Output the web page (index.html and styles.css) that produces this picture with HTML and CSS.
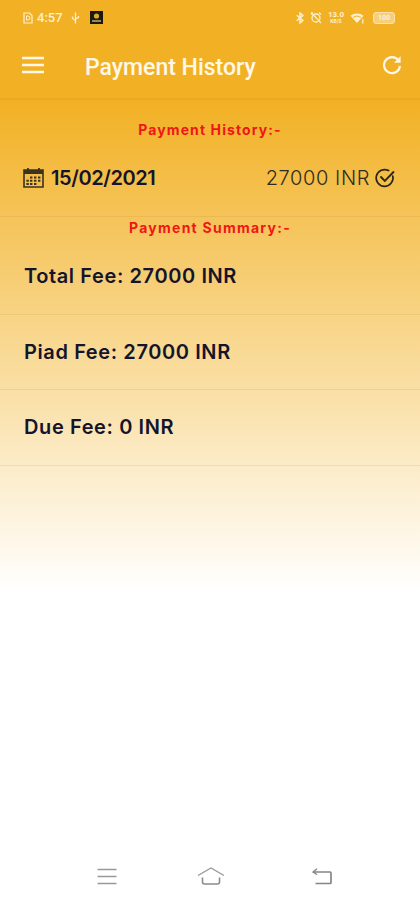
FILE: index.html
```html
<!DOCTYPE html>
<html lang="en">
<head>
    <meta charset="UTF-8">
    <meta name="viewport" content="width=device-width, initial-scale=1.0">
    <title>Payment History</title>
    <link rel="stylesheet" href="styles.css">
</head>
<body>
    <div class="screen">
        <div class="appbar">
            <div class="statusbar">
                <div class="status-left">
                    <svg class="ic-sim" width="10" height="12" viewBox="0 0 10 12"><path d="M1 1h5.500L9 3.500V11H1z" fill="none" stroke="#fdf0d0" stroke-width="1.2"/><path d="M3.500 4h1.500a2 2 0 0 1 0 4H3.500z" fill="none" stroke="#fdf0d0" stroke-width="1"/></svg>
                    <span class="clock">4:57</span>
                    <svg class="ic-usb" width="9" height="12" viewBox="0 0 9 12"><path d="M4.500 0.500v11" fill="none" stroke="#fdf0d0" stroke-width="1.300"/><path d="M4.500 8.500L1.500 6.500V4.500M4.500 7l3-1.500V4" fill="none" stroke="#fdf0d0" stroke-width="1.300"/></svg>
                    <svg class="ic-app" width="13" height="13" viewBox="0 0 13 13"><rect width="13" height="13" fill="#1c1a10"/><circle cx="6.500" cy="5" r="2.600" fill="#d9ad1f"/><rect x="2" y="9" width="9" height="2" fill="#8f8a60"/></svg>
                </div>
                <div class="status-right">
                    <svg width="8" height="12" viewBox="0 0 8 12"><path d="M0.800 3.200l6 5.400L4 11V1l2.800 2.400L0.800 8.800" fill="none" stroke="#fdf0d0" stroke-width="1.500"/></svg>
                    <svg width="12" height="13" viewBox="0 0 12 13"><circle cx="6" cy="7" r="4" fill="none" stroke="#fdf0d0" stroke-width="1.300"/><path d="M1 1.500l10 10.500M1 3.500l2-2M9 1.500l2 2" fill="none" stroke="#fdf0d0" stroke-width="1.100"/></svg>
                    <span class="speed"><b>13.0</b><i>KB/S</i></span>
                    <svg width="15" height="12" viewBox="0 0 15 12"><path d="M0.500 3.800a10 10 0 0 1 13 0L7 11z" fill="#fdf0d0"/><path d="M3 5.300a7 7 0 0 1 8 0" fill="none" stroke="#f2b124" stroke-width="1"/><path d="M12.800 7v4.500" stroke="#fdf0d0" stroke-width="1.300"/></svg>
                    <span class="battery">100</span>
                </div>
            </div>
            <div class="toolbar">
                <svg class="ic-menu" width="22" height="18" viewBox="0 0 22 18"><path d="M0 2h22M0 9h22M0 16h22" stroke="#fff8e8" stroke-width="2.400"/></svg>
                <span class="title">Payment History</span>
                <svg class="ic-refresh" width="20" height="20" viewBox="0 0 20 20"><path d="M16.400 5.200A8 8 0 1 0 18 11" fill="none" stroke="#fff8e8" stroke-width="2.200"/><path d="M18.600 1.200v6.600H12z" fill="#fff8e8"/></svg>
            </div>
        </div>

        <div class="content">
            <h2 class="heading">Payment History:-</h2>
            <div class="payment">
                <div class="payment-date">
                    <svg width="21" height="21" viewBox="0 0 21 21"><path d="M1 3h19v17H1z" fill="none" stroke="#3a3320" stroke-width="1.600"/><path d="M1 3h19v4H1z" fill="#3a3320"/><path d="M5 1v4M16 1v4" stroke="#3a3320" stroke-width="1.800"/><path d="M7 9.500h2.400v2H7zM11 9.500h2.400v2H11zM15 9.500h2.400v2H15zM3.400 12.700h2.400v2H3.400zM7 12.700h2.400v2H7zM11 12.700h2.400v2H11zM15 12.700h2.400v2H15zM3.400 16h2.400v2H3.400zM7 16h2.400v2H7zM11 16h2.400v2H11z" fill="#3a3320"/></svg>
                    <span>15/02/2021</span>
                </div>
                <div class="payment-amount">
                    <span>27000 INR</span>
                    <svg width="20" height="20" viewBox="0 0 20 20"><path d="M17.800 8.200A8.400 8.400 0 1 1 13.600 2.600" fill="none" stroke="#2a2618" stroke-width="1.700" stroke-linecap="round"/><path d="M6 9l3.800 3.800L18.500 4" fill="none" stroke="#2a2618" stroke-width="1.900" stroke-linecap="round"/></svg>
                </div>
            </div>
            <h2 class="heading heading-summary">Payment Summary:-</h2>
            <div class="fee-row">Total Fee: 27000 INR</div>
            <div class="fee-row">Piad Fee: 27000 INR</div>
            <div class="fee-row">Due Fee: 0 INR</div>
        </div>

        <div class="navbar">
            <svg width="20" height="17" viewBox="0 0 20 17"><path d="M0.500 1.500h19M0.500 8.500h19M0.500 15.500h19" stroke="#999" stroke-width="1.700"/></svg>
            <svg class="ic-home" width="28" height="18" viewBox="0 0 28 18"><path d="M1 8.500L14 1 27 8.500" fill="none" stroke="#999" stroke-width="1.400"/><path d="M5.500 10.500v4.500a2 2 0 0 0 2 2h13a2 2 0 0 0 2-2v-4.500" fill="none" stroke="#8c8c8c" stroke-width="1.600"/></svg>
            <svg width="20" height="17" viewBox="0 0 20 17"><path d="M1.500 4h16.500a1 1 0 0 1 1 1v9.500a1 1 0 0 1-1 1H3.500" fill="none" stroke="#858585" stroke-width="1.700"/><path d="M5 0.800L1 4l4 2.500" fill="none" stroke="#858585" stroke-width="1.400"/></svg>
        </div>
    </div>
</body>
</html>
```

FILE: styles.css
```css
* {
    box-sizing: border-box;
}
html, body {
    margin: 0;
    padding: 0;
    background: #fff;
}
.screen {
    width: 420px;
    height: 900px;
    display: flex;
    flex-direction: column;
    overflow: hidden;
}
.appbar {
    height: 100px;
    background: #f2b124;
    border-bottom: 2px solid #eaa922;
    padding: 0 24px 0 22px;
}
.statusbar {
    height: 35px;
    display: flex;
    align-items: center;
    justify-content: space-between;
    color: #fdf0d0;
    font-family: Roboto, sans-serif;
}
.status-left, .status-right {
    display: flex;
    align-items: center;
}
.status-left {
    gap: 3px;
    margin-left: 1px;
}
.status-right {
    gap: 6px;
    margin-right: 1px;
}
.clock {
    font-size: 13px;
    font-weight: 500;
    margin-left: 1px;
}
.ic-usb {
    margin-left: 5px;
}
.ic-app {
    margin-left: 7px;
}
.speed {
    display: flex;
    flex-direction: column;
    align-items: center;
    line-height: 7px;
}
.speed b {
    font-size: 8px;
    font-weight: 700;
}
.speed i {
    font-size: 5px;
    font-style: normal;
    font-weight: 700;
}
.battery {
    width: 22px;
    height: 12px;
    margin-left: 2px;
    border: 1px solid #fbe3ab;
    border-radius: 3px;
    background: #f7cf7c;
    font-size: 7px;
    line-height: 10px;
    text-align: center;
    font-weight: 700;
}
.toolbar {
    height: 63px;
    display: flex;
    align-items: center;
}
.ic-menu {
    margin-top: -4px;
}
.title {
    margin-left: 41px;
    padding-top: 2px;
    font-family: Roboto, sans-serif;
    font-size: 23px;
    font-weight: 500;
    color: #fff8e8;
    flex: 1;
}
.ic-refresh {
    margin-top: -4px;
    margin-right: -6px;
}
.content {
    height: 490px;
    padding-top: 21px;
    background: linear-gradient(#f2b124, #ffffff);
    font-family: Inter, sans-serif;
    color: #14142b;
}
.heading {
    margin: 0;
    text-align: center;
    font-size: 14px;
    line-height: 18px;
    font-weight: 700;
    color: #f01616;
    letter-spacing: 1.1px;
}
.heading-summary {
    margin-bottom: 2px;
    letter-spacing: 1.25px;
}
.payment {
    height: 70px;
    margin-top: 8px;
    margin-bottom: 2px;
    padding: 0 25px 8px 23px;
    display: flex;
    align-items: center;
    justify-content: space-between;
    border-bottom: 1px solid rgba(160, 130, 60, 0.14);
}
.payment-date, .payment-amount {
    display: flex;
    align-items: center;
}
.payment-date {
    gap: 7px;
    font-size: 20px;
    font-weight: 600;
    letter-spacing: -0.4px;
}
.payment-amount {
    gap: 5px;
    font-size: 20px;
    font-weight: 300;
    letter-spacing: 0.6px;
    color: #2e2b22;
}
.fee-row {
    height: 75.6px;
    padding-left: 24px;
    display: flex;
    align-items: center;
    font-size: 20px;
    font-weight: 600;
    letter-spacing: 0.6px;
    border-bottom: 1px solid rgba(160, 130, 60, 0.14);
}
.navbar {
    flex: 1;
    display: flex;
    align-items: flex-end;
    padding: 0 0 15px 97px;
}
.ic-home {
    margin: 0 87px 0 80px;
}
```
